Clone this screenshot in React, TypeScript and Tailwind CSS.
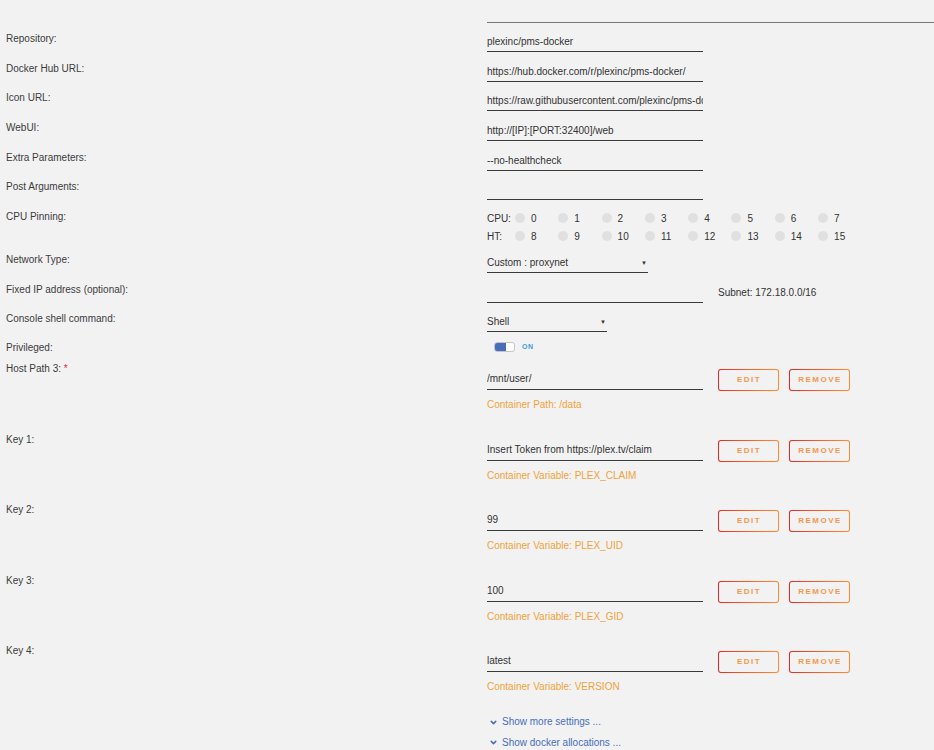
import React from "react";
import { ChevronDown } from "lucide-react";

const FONT = "font-['Liberation_Sans',Arial,sans-serif]";

function Label({ children }: { children: React.ReactNode }) {
  return (
    <div className="w-[487px] shrink-0 pl-[6px] pt-px leading-3 text-[#3c3c3c]">
      {children}
    </div>
  );
}

function Field({ value, width = "w-[216px]" }: { value?: string; width?: string }) {
  return (
    <div
      className={`${width} mt-[4px] h-[16px] border-b border-[#3a3a3a] leading-3 text-[#333] whitespace-nowrap overflow-hidden`}
    >
      {value}
    </div>
  );
}

function Select({ value, width }: { value: string; width: string }) {
  return (
    <div
      className={`${width} mt-[4px] h-[16px] border-b border-[#3a3a3a] leading-3 text-[#333] flex justify-between pr-[1px]`}
    >
      <span>{value}</span>
      <span className="text-[6px] leading-3">▼</span>
    </div>
  );
}

function GradButton({ children }: { children: React.ReactNode }) {
  return (
    <div className="w-[61px] h-[22px] rounded-[3px] p-px bg-gradient-to-r from-[#e22828] to-[#ff8c2f] shadow-[0_0_1px_rgba(0,0,0,0.15)]">
      <div className="w-full h-full rounded-[2px] bg-[#f2f2f2] flex items-center justify-center text-[8px] font-bold tracking-[1.5px] text-[#f5984e] pl-[1px]">
        {children}
      </div>
    </div>
  );
}

function PathBlock({
  label,
  value,
  desc,
  required,
}: {
  label: string;
  value: string;
  desc: string;
  required?: boolean;
}) {
  return (
    <div className="flex h-[70.5px]">
      <Label>
        {label}
        {required && <span className="text-[#e22828]"> *</span>}
      </Label>
      <div className="flex flex-col">
        <div className="flex items-start">
          <div className="w-[216px] mt-[11px] h-[17px] border-b border-[#3a3a3a] leading-3 text-[#333] whitespace-nowrap overflow-hidden">
            {value}
          </div>
          <div className="ml-[15px] mt-[7px] flex gap-[10px]">
            <GradButton>EDIT</GradButton>
            <GradButton>REMOVE</GradButton>
          </div>
        </div>
        <div className="mt-[8px] leading-3 text-[#f0a33c]">{desc}</div>
      </div>
    </div>
  );
}

function CpuLine({ label, nums }: { label: string; nums: number[] }) {
  return (
    <div className="flex items-center h-[18px] text-[#333]">
      <div className="w-[28px]">{label}</div>
      {nums.map((n) => (
        <div key={n} className="w-[43.3px] flex items-center">
          <div className="w-[10px] h-[10px] rounded-full bg-[#e0e0e0]" />
          <span className="ml-[6px]">{n}</span>
        </div>
      ))}
    </div>
  );
}

const simpleRows: [string, string][] = [
  ["Repository:", "plexinc/pms-docker"],
  ["Docker Hub URL:", "https://hub.docker.com/r/plexinc/pms-docker/"],
  ["Icon URL:", "https://raw.githubusercontent.com/plexinc/pms-docker/master/img/plex-server.png"],
  ["WebUI:", "http://[IP]:[PORT:32400]/web"],
  ["Extra Parameters:", "--no-healthcheck"],
  ["Post Arguments:", ""],
];

export default function App() {
  return (
    <div className={`${FONT} text-[10px] bg-[#f2f2f2] w-[934px] h-[750px] overflow-hidden`}>
      <div className="pt-[22px] pl-[487px]">
        <div className="h-px bg-[#777]" />
      </div>

      <div className="mt-[9px]">
        {simpleRows.map(([l, v]) => (
          <div key={l} className="flex h-[29.7px]">
            <Label>{l}</Label>
            <Field value={v} />
          </div>
        ))}

        {/* CPU pinning */}
        <div className="flex h-[42.7px]">
          <Label>CPU Pinning:</Label>
          <div className="-mt-[1px]">
            <CpuLine label="CPU:" nums={[0, 1, 2, 3, 4, 5, 6, 7]} />
            <CpuLine label="HT:" nums={[8, 9, 10, 11, 12, 13, 14, 15]} />
          </div>
        </div>

        <div className="flex h-[30px]">
          <Label>Network Type:</Label>
          <Select value="Custom : proxynet" width="w-[161px]" />
        </div>

        <div className="flex h-[29.3px]">
          <Label>Fixed IP address (optional):</Label>
          <Field value="" />
          <div className="ml-[15px] mt-[4px] leading-3 text-[#333]">Subnet: 172.18.0.0/16</div>
        </div>

        <div className="flex h-[28.7px]">
          <Label>Console shell command:</Label>
          <Select value="Shell" width="w-[120px]" />
        </div>

        <div className="flex h-[21.6px]">
          <Label>Privileged:</Label>
          <div className="flex items-center ml-[7px] mt-px h-[10px]">
            <div className="w-[21px] h-[10px] rounded-[3px] border border-[#c4c4c4] bg-white flex overflow-hidden">
              <div className="w-[11px] h-full bg-[#486dba]" />
              <div className="flex-1 rounded-full bg-white" />
            </div>
            <span className="ml-[7px] text-[7px] font-bold tracking-[0.5px] text-[#3f9ad8]">ON</span>
          </div>
        </div>

        <PathBlock label="Host Path 3:" required value="/mnt/user/" desc="Container Path: /data" />
        <PathBlock
          label="Key 1:"
          value="Insert Token from https://plex.tv/claim"
          desc="Container Variable: PLEX_CLAIM"
        />
        <PathBlock label="Key 2:" value="99" desc="Container Variable: PLEX_UID" />
        <PathBlock label="Key 3:" value="100" desc="Container Variable: PLEX_GID" />
        <PathBlock label="Key 4:" value="latest" desc="Container Variable: VERSION" />

        <div className="pl-[489px] mt-[1.2px] flex flex-col gap-[8.6px] text-[#486dba]">
          <div className="flex items-center leading-3">
            <ChevronDown size={9} strokeWidth={4} />
            <span className="ml-[4px]">Show more settings ...</span>
          </div>
          <div className="flex items-center leading-3">
            <ChevronDown size={9} strokeWidth={4} />
            <span className="ml-[4px]">Show docker allocations ...</span>
          </div>
        </div>
      </div>
    </div>
  );
}
